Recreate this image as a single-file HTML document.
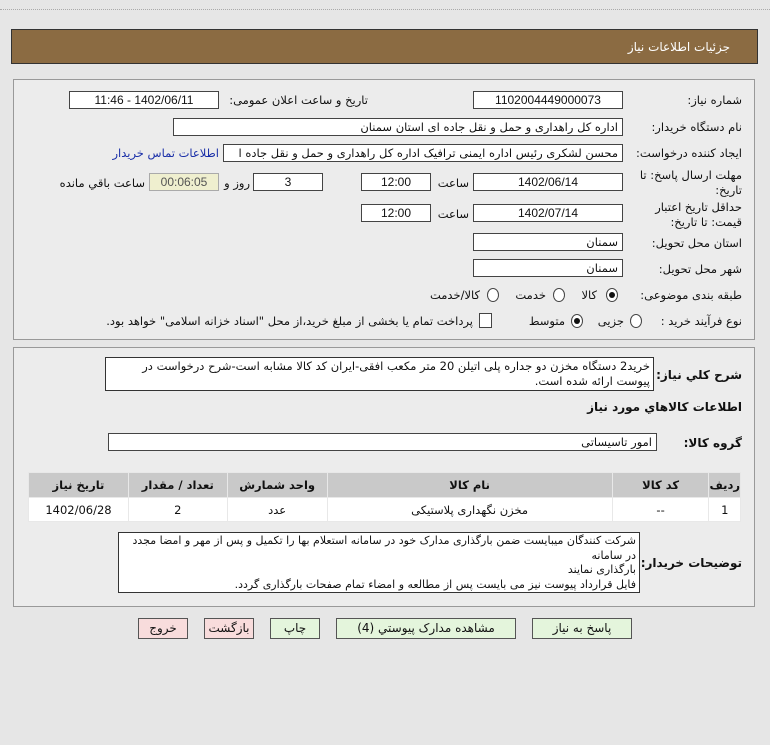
<!DOCTYPE html>
<html><head><meta charset="utf-8">
<style>
*{margin:0;padding:0;box-sizing:border-box}
body{width:770px;height:745px;background:#e6e6e6;font-family:"DejaVu Sans","Liberation Sans",sans-serif;font-size:11.5px;color:#111;position:relative;overflow:hidden;direction:rtl}
.a{position:absolute;white-space:nowrap}
.f{position:absolute;background:#fff;border:1px solid #444;height:18px;line-height:16px;text-align:center;font-size:12px;font-family:"Liberation Sans","DejaVu Sans",sans-serif}
.fr{text-align:right;padding-right:4px;font-family:"DejaVu Sans",sans-serif;font-size:11.5px}
.lbl{position:absolute;white-space:nowrap;text-align:right}
.panel{position:absolute;border:1px solid #999;background:#ececec}
.rad{position:absolute;width:12px;height:14px;border:1px solid #444;border-radius:50%;background:#fff}
.rad.on::after{content:"";position:absolute;left:2px;top:3px;width:6px;height:6px;border-radius:50%;background:#111}
table{border-collapse:collapse;position:absolute}
td{border:1px solid #e8e8e8;text-align:center;font-size:11.5px}
.btn{position:absolute;height:21px;border:1px solid #555;text-align:center;line-height:19px;font-size:12px}
.g{background:#e4f5dc}.p{background:#f8dcdc}
</style></head><body>
<div class="a" style="left:0;top:9px;width:770px;border-top:1px dotted #aaa"></div>
<div class="a" style="left:11px;top:29px;width:747px;height:35px;background:#8b6b42;border:1px solid #333"></div>
<div class="a" style="right:40px;top:40px;color:#fff;font-size:12px">جزئیات اطلاعات نیاز</div>

<div class="panel" style="left:13px;top:79px;width:742px;height:261px"></div>
<div class="lbl" style="right:28px;top:93px">شماره نیاز:</div>
<div class="f" style="left:473px;top:91px;width:150px">1102004449000073</div>
<div class="lbl" style="right:402px;top:93px">تاریخ و ساعت اعلان عمومی:</div>
<div class="f" style="left:69px;top:91px;width:150px">1402/06/11 - 11:46</div>

<div class="lbl" style="right:28px;top:120px">نام دستگاه خریدار:</div>
<div class="f fr" style="left:173px;top:118px;width:450px">اداره کل راهداری و حمل و نقل جاده ای استان سمنان</div>

<div class="lbl" style="right:28px;top:146px">ایجاد کننده درخواست:</div>
<div class="f fr" style="left:223px;top:144px;width:400px;overflow:hidden">محسن لشکری رئیس اداره ایمنی ترافیک اداره کل راهداری و حمل و نقل جاده ا</div>
<div class="lbl" style="right:551px;top:146px;color:#1a2fa8">اطلاعات تماس خریدار</div>

<div class="lbl" style="right:28px;top:168px;line-height:15px">مهلت ارسال پاسخ: تا<br>تاریخ:</div>
<div class="f" style="left:473px;top:173px;width:150px">1402/06/14</div>
<div class="lbl" style="right:301px;top:176px">ساعت</div>
<div class="f" style="left:361px;top:173px;width:70px">12:00</div>
<div class="f" style="left:253px;top:173px;width:70px">3</div>
<div class="lbl" style="right:520px;top:176px">روز و</div>
<div class="f" style="left:149px;top:173px;width:70px;background:#efefcf;color:#555;border-color:#aaa">00:06:05</div>
<div class="lbl" style="right:625px;top:176px">ساعت باقي مانده</div>

<div class="lbl" style="right:28px;top:200px;line-height:15px">حداقل تاریخ اعتبار<br>قیمت: تا تاریخ:</div>
<div class="f" style="left:473px;top:204px;width:150px">1402/07/14</div>
<div class="lbl" style="right:301px;top:207px">ساعت</div>
<div class="f" style="left:361px;top:204px;width:70px">12:00</div>

<div class="lbl" style="right:28px;top:236px">استان محل تحویل:</div>
<div class="f fr" style="left:473px;top:233px;width:150px">سمنان</div>
<div class="lbl" style="right:28px;top:262px">شهر محل تحویل:</div>
<div class="f fr" style="left:473px;top:259px;width:150px">سمنان</div>

<div class="lbl" style="right:28px;top:288px">طبقه بندی موضوعی:</div>
<div class="rad on" style="left:606px;top:288px"></div><div class="lbl" style="right:173px;top:288px">کالا</div>
<div class="rad" style="left:553px;top:288px"></div><div class="lbl" style="right:224px;top:288px">خدمت</div>
<div class="rad" style="left:487px;top:288px"></div><div class="lbl" style="right:290px;top:288px">کالا/خدمت</div>

<div class="lbl" style="right:28px;top:314px">نوع فرآیند خرید :</div>
<div class="rad" style="left:630px;top:314px"></div><div class="lbl" style="right:146px;top:314px">جزیی</div>
<div class="rad on" style="left:571px;top:314px"></div><div class="lbl" style="right:205px;top:314px">متوسط</div>
<div class="a" style="left:479px;top:313px;width:13px;height:15px;border:1px solid #444;background:#fff"></div>
<div class="lbl" style="right:297px;top:314px">پرداخت تمام یا بخشی از مبلغ خرید،از محل "اسناد خزانه اسلامی" خواهد بود.</div>

<div class="panel" style="left:13px;top:347px;width:742px;height:260px"></div>
<div class="lbl" style="right:28px;top:368px;font-weight:bold;font-size:12px">شرح کلي نياز:</div>
<div class="a" style="left:105px;top:357px;width:549px;height:34px;background:#fff;border:1px solid #333;white-space:normal;text-align:right;padding:1px 3px;line-height:15px">خرید2 دستگاه مخزن دو جداره پلی اتیلن 20 متر مکعب افقی-ایران کد کالا مشابه است-شرح درخواست در پیوست ارائه شده است.</div>
<div class="lbl" style="right:28px;top:400px;font-weight:bold;font-size:12px">اطلاعات کالاهاي مورد نياز</div>
<div class="lbl" style="right:28px;top:436px;font-weight:bold;font-size:12px">گروه کالا:</div>
<div class="f fr" style="left:108px;top:433px;width:549px">امور تاسیساتی</div>

<table style="left:28px;top:472px;width:713px">
<tr style="background:#c9c9c9;height:25px;font-weight:bold"><td style="width:27px">رديف</td><td style="width:97px">کد کالا</td><td style="width:286px">نام کالا</td><td style="width:100px">واحد شمارش</td><td style="width:99px">تعداد / مقدار</td><td style="width:100px">تاریخ نیاز</td></tr>
<tr style="background:#fff;height:24px"><td>1</td><td>--</td><td>مخزن نگهداری پلاستیکی</td><td>عدد</td><td>2</td><td>1402/06/28</td></tr>
</table>

<div class="lbl" style="right:28px;top:556px;font-weight:bold;font-size:12px">توضیحات خریدار:</div>
<div class="a" style="left:118px;top:532px;width:522px;height:61px;background:#fff;border:1px solid #333;white-space:normal;text-align:right;padding:1px 3px;line-height:14.5px;font-size:11px">شرکت کنندگان میبایست ضمن بارگذاری مدارک خود در سامانه استعلام بها را تکمیل و پس از مهر و امضا مجدد در سامانه<br>بارگذاری نمایند<br>فایل قرارداد پیوست نیز می بایست پس از مطالعه و امضاء تمام صفحات بارگذاری گردد.</div>

<div class="btn g" style="left:532px;top:618px;width:100px">پاسخ به نیاز</div>
<div class="btn g" style="left:336px;top:618px;width:180px">مشاهده مدارک پیوستي (4)</div>
<div class="btn g" style="left:270px;top:618px;width:50px">چاپ</div>
<div class="btn p" style="left:204px;top:618px;width:50px">بازگشت</div>
<div class="btn p" style="left:138px;top:618px;width:50px">خروج</div>
</body></html>
